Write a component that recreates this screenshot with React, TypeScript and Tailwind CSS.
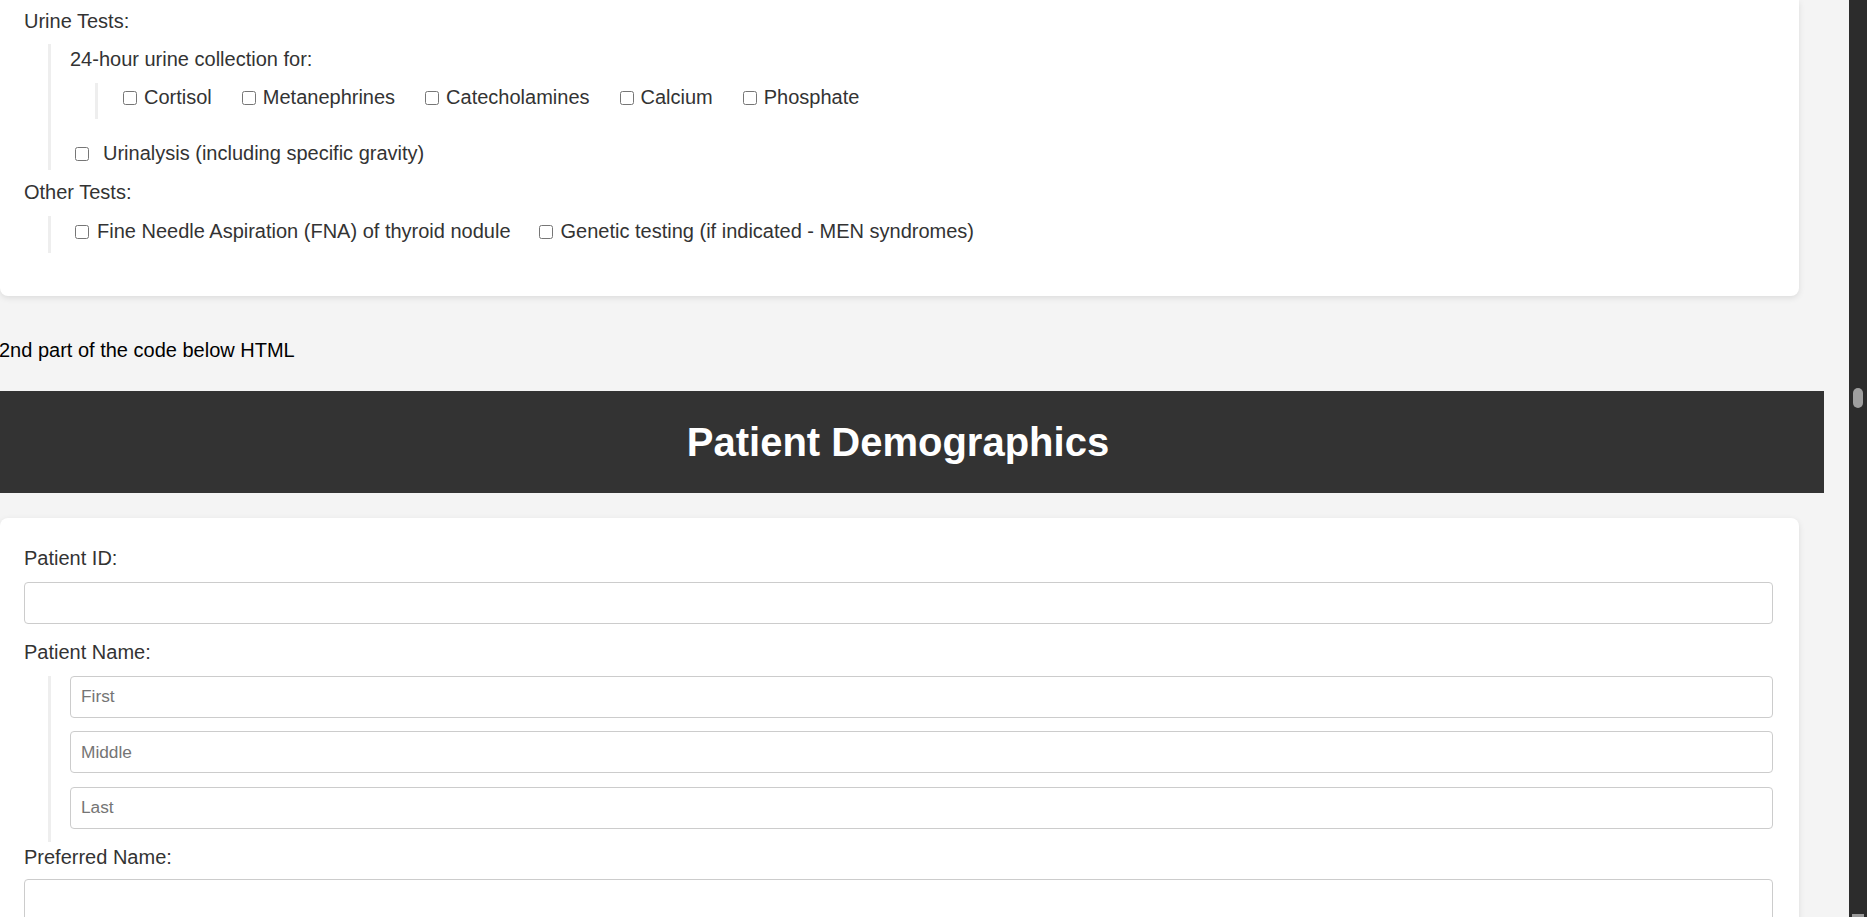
import React from "react";

const hormoneTests = ["Cortisol", "Metanephrines", "Catecholamines", "Calcium", "Phosphate"];

const Check = ({ className = "" }: { className?: string }) => (
  <input
    type="checkbox"
    className={`appearance-none shrink-0 w-[14px] h-[14px] border border-[#767676] rounded-[2.5px] bg-white ${className}`}
  />
);

const Field = ({ placeholder = "" }: { placeholder?: string }) => (
  <input
    type="text"
    placeholder={placeholder}
    className="block w-full h-[42px] border border-[#cccccc] rounded-[4px] bg-white px-[10px] text-[17.3px] text-[#333] placeholder:text-[#757575] outline-none"
  />
);

const Label = ({ children, tight = false }: { children: React.ReactNode; tight?: boolean }) => (
  <div className={`pt-[4px] leading-[23px] ${tight ? "pb-[10px]" : "pb-[11.5px]"}`}>{children}</div>
);

export default function App() {
  return (
    <div className="flex h-screen overflow-hidden bg-[#f4f4f4] font-['Liberation_Sans',Arial,sans-serif] text-[20px] text-[#333]">
      <div className="flex-1 min-w-0 overflow-hidden">
        {/* lab tests card (top cut off by scroll) */}
        <section className="w-[1799px] bg-white rounded-b-[8px] shadow-[0_2px_6px_rgba(0,0,0,0.1)] pl-[24px] pr-[26px] pt-[10px] pb-[43px]">
          <div className="leading-[23px]">Urine Tests:</div>
          <div className="mt-[11px] ml-[24px] border-l-[3px] border-[#eeeeee] pl-[19px] pt-[4px] pb-[5px]">
            <div className="leading-[23px]">24-hour urine collection for:</div>
            <div className="mt-[12px] ml-[25px] border-l-[3px] border-[#eeeeee] pl-[20px] pt-[3px] pb-[10px]">
              <div className="flex leading-[23px]">
                {hormoneTests.map((t) => (
                  <label key={t} className="flex items-center mr-[25px]">
                    <Check className="ml-[5px] mr-[7px]" />
                    {t}
                  </label>
                ))}
              </div>
            </div>
            <label className="flex items-center mt-[23px] leading-[23px]">
              <Check className="ml-[5px] mr-[14px]" />
              Urinalysis (including specific gravity)
            </label>
          </div>
          <div className="mt-[11px] leading-[23px]">Other Tests:</div>
          <div className="mt-[12px] ml-[24px] border-l-[3px] border-[#eeeeee] pl-[19px] pt-[4px] pb-[10px]">
            <div className="flex leading-[23px]">
              <label className="flex items-center mr-[23px]">
                <Check className="ml-[5px] mr-[8px]" />
                Fine Needle Aspiration (FNA) of thyroid nodule
              </label>
              <label className="flex items-center">
                <Check className="ml-[5px] mr-[8px]" />
                Genetic testing (if indicated - MEN syndromes)
              </label>
            </div>
          </div>
        </section>

        <p className="mt-[42.5px] -ml-[1px] leading-[23px] text-black">2nd part of the code below HTML</p>

        <header className="mt-[29.5px] w-[1824px] h-[102px] bg-[#333333] flex items-center justify-center pr-[28px]">
          <h1 className="text-[40px] font-bold text-white leading-none">Patient Demographics</h1>
        </header>

        <section className="mt-[25px] w-[1799px] bg-white rounded-[8px] shadow-[0_2px_6px_rgba(0,0,0,0.1)] pl-[24px] pr-[26px] pt-[25px] pb-[24px]">
          <Label>Patient ID:</Label>
          <div className="pb-[13.5px]">
            <Field />
          </div>
          <Label>Patient Name:</Label>
          <div className="ml-[24px] border-l-[3px] border-[#eeeeee] pl-[19px]">
            {["First", "Middle", "Last"].map((p) => (
              <div key={p} className="pb-[13.5px]">
                <Field placeholder={p} />
              </div>
            ))}
          </div>
          <Label tight>Preferred Name:</Label>
          <div className="pb-[13.5px]">
            <Field />
          </div>
        </section>
      </div>

      {/* window scrollbar */}
      <div className="w-[18px] shrink-0 bg-[#2c2c2c] flex flex-col pt-[388px]">
        <div className="ml-[4px] w-[10px] h-[20px] rounded-full bg-[#9f9f9f]" />
        <div className="flex-1" />
        <div className="ml-[3px] w-[12px] h-[3px] bg-[#9a9a9a]" />
      </div>
    </div>
  );
}
